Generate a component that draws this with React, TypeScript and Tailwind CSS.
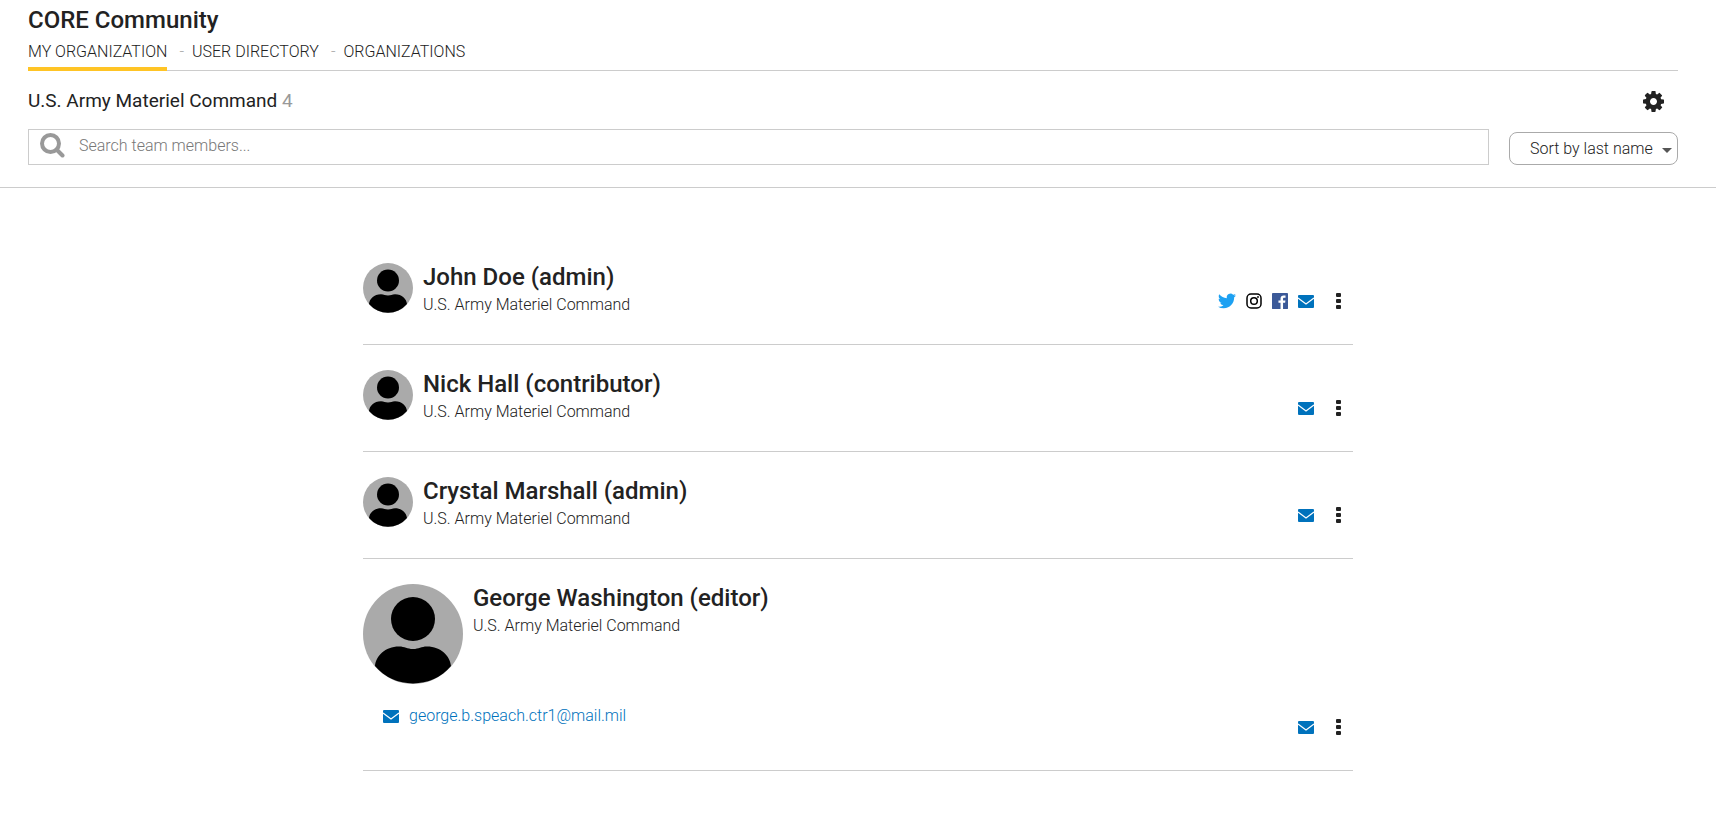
import React from "react";

function Avatar({ large = false }: { large?: boolean }) {
  return (
    <svg viewBox="0 0 100 100" aria-hidden="true" className={large ? "size-[100px] shrink-0" : "size-[50px] shrink-0"}>
      <circle cx="50" cy="50" r="50" fill="#aaaaaa" />
      <circle cx="50" cy="35" r="22" />
      <path d="M12 82C13 72 22 62.500 36 62.500C42 62.500 44 65 50 65C56 65 58 62.500 64 62.500C78 62.500 87 72 88 82A50 50 0 0 1 12 82Z" />
    </svg>
  );
}

function Gear() {
  return (
    <svg viewBox="128 128 1536 1536" aria-hidden="true" className="size-[21px] fill-[#222222]">
      <path d="M1152 896q0-106-75-181t-181-75-181 75-75 181 75 181 181 75 181-75 75-181zm512-109v222q0 12-8 23t-20 13l-185 28q-19 54-39 91 35 50 107 138 10 12 10 25t-9 23q-27 37-99 108t-94 71q-12 0-26-9l-138-108q-44 23-91 38-16 136-29 186-7 28-36 28h-222q-14 0-24.500-8.500t-11.500-21.500l-28-184q-49-16-90-37l-141 107q-10 9-25 9-14 0-25-11-126-114-165-168-7-10-7-23 0-12 8-23 15-21 51-66.500t54-70.500q-27-50-41-99l-183-27q-13-2-21-12.500t-8-23.500v-222q0-12 8-23t19-13l186-28q14-46 39-92-40-57-107-138-10-12-10-24 0-10 9-23 26-36 98.500-107.500t94.500-71.500q13 0 26 10l138 107q44-23 91-38 16-136 29-186 7-28 36-28h222q14 0 24.500 8.500t11.500 21.500l28 184q49 16 90 37l142-107q9-9 24-9 13 0 25 10 129 119 165 170 7 8 7 22 0 12-8 23-15 21-51 66.500t-54 70.500q26 50 41 98l183 28q13 2 21 12.500t8 23.500z" />
    </svg>
  );
}

function SearchIcon() {
  return (
    <svg viewBox="0 0 25 25" aria-hidden="true" className="size-[25px] shrink-0" fill="none" stroke="#999999">
      <circle cx="10.500" cy="10.500" r="8.500" strokeWidth="4" />
      <path d="M17 17L22.500 22.500" strokeWidth="4" strokeLinecap="round" />
    </svg>
  );
}

function Mail() {
  return (
    <svg viewBox="0 0 16 13" aria-hidden="true" className="h-[13px] w-4 shrink-0">
      <rect width="16" height="13" rx="1" fill="#0072bc" />
      <path d="M0 3L8 9L16 3" fill="none" stroke="#fff" strokeWidth="1.200" />
    </svg>
  );
}

function Twitter() {
  return (
    <svg viewBox="0 0 24 24" aria-hidden="true" className="size-[18px] fill-[#1da1f2]">
      <path d="M23.950 4.570a10 10 0 0 1-2.820.770 4.960 4.960 0 0 0 2.160-2.720c-.950.550-2 .960-3.130 1.180a4.920 4.920 0 0 0-8.380 4.480C7.690 8.100 4.070 6.130 1.640 3.160a4.820 4.820 0 0 0-.670 2.480c0 1.710.870 3.210 2.190 4.100a4.900 4.900 0 0 1-2.230-.620v.060a4.920 4.920 0 0 0 3.950 4.830 5 5 0 0 1-2.210.080 4.940 4.940 0 0 0 4.600 3.420A9.870 9.870 0 0 1 0 19.540a14 14 0 0 0 7.550 2.210c9.050 0 14-7.500 14-13.980 0-.210 0-.420-.020-.630a9.940 9.940 0 0 0 2.460-2.550z" />
    </svg>
  );
}

function Instagram() {
  return (
    <svg viewBox="0 0 16 16" aria-hidden="true" className="size-4" fill="none" stroke="#000" strokeWidth="1.500">
      <rect x="1" y="1" width="14" height="14" rx="4" />
      <circle cx="8" cy="8" r="3.300" />
      <circle cx="12" cy="4" r="0.900" fill="#000" stroke="none" />
    </svg>
  );
}

function Facebook() {
  return (
    <svg viewBox="0 0 24 24" aria-hidden="true" className="size-4">
      <rect x="0" y="0" width="24" height="24" rx="1.300" fill="#3b5998" />
      <path d="M16.570 24v-9.290h3.120l.470-3.620h-3.590V8.780c0-1.050.290-1.760 1.790-1.760h1.920V3.780a26 26 0 0 0-2.800-.140c-2.770 0-4.660 1.690-4.660 4.790v2.660H9.690v3.620h3.130V24z" fill="#fff" />
    </svg>
  );
}

function Dots() {
  return (
    <svg viewBox="0 0 5 16" aria-hidden="true" className="h-4 w-[5px] fill-[#222222]">
      <rect width="5" height="4" rx="1" />
      <rect y="6" width="5" height="4" rx="1" />
      <rect y="12" width="5" height="4" rx="1" />
    </svg>
  );
}

type Member = { name: string; role: string; social?: boolean; email?: string };

const members: Member[] = [
  { name: "John Doe", role: "admin", social: true },
  { name: "Nick Hall", role: "contributor" },
  { name: "Crystal Marshall", role: "admin" },
  { name: "George Washington", role: "editor", email: "george.b.speach.ctr1@mail.mil" },
];

function MemberRow({ name, role, social, email }: Member) {
  return (
    <li className="flex items-end justify-between border-b border-[#cccccc] py-[25px]">
      <div>
        <div className="flex gap-[10px]">
          <Avatar large={!!email} />
          <div>
            <h3 className="text-2xl leading-[28px] font-medium">{name} ({role})</h3>
            <p className="text-base leading-[28px] font-light">U.S. Army Materiel Command</p>
          </div>
        </div>
        {email && (
          <a href={`mailto:${email}`} className="mt-5 mb-[17px] ml-5 flex items-center gap-[10px] text-base leading-6 font-light text-[#0072bc]">
            <Mail />
            {email}
          </a>
        )}
      </div>
      <div className="mb-2 flex h-5 items-center gap-[10px] pr-3">
        {social && (
          <>
            <a href="#twitter" aria-label="Twitter"><Twitter /></a>
            <a href="#instagram" aria-label="Instagram"><Instagram /></a>
            <a href="#facebook" aria-label="Facebook"><Facebook /></a>
          </>
        )}
        <a href="#email" aria-label={`Email ${name}`}><Mail /></a>
        <button type="button" aria-label={`Options for ${name}`} className="ml-3"><Dots /></button>
      </div>
    </li>
  );
}

export default function App() {
  return (
    <div className="min-h-screen bg-white font-['Roboto',sans-serif] text-[#222222]">
      <header className="border-b border-[#cccccc] pr-[38px] pb-[22px] pl-7">
        <h1 className="pt-1 text-2xl leading-8 font-medium">CORE Community</h1>
        <nav className="flex border-b border-[#cccccc] text-base leading-[31px] font-light">
          <a href="#mine" className="-mb-px border-b-4 border-[#ffc425]">MY ORGANIZATION</a>
          <span className="pr-2 pl-3 text-[#aaaaaa]">-</span>
          <a href="#users">USER DIRECTORY</a>
          <span className="pr-2 pl-3 text-[#aaaaaa]">-</span>
          <a href="#organizations">ORGANIZATIONS</a>
        </nav>
        <div className="mt-4 flex items-center justify-between pr-[14px]">
          <h2 className="text-[19px] leading-7 font-normal">U.S. Army Materiel Command <span className="text-[#999999]">4</span></h2>
          <button type="button" aria-label="Settings"><Gear /></button>
        </div>
        <div className="mt-[14px] flex items-end gap-5">
          <label className="flex h-9 flex-1 items-start gap-3 border border-[#cccccc] pt-[3px] pl-[11px]">
            <SearchIcon />
            <input type="search" aria-label="Search team members" placeholder="Search team members..." className="min-w-0 flex-1 pl-[2px] text-base leading-[25px] font-light outline-none placeholder:text-[#777777]" />
          </label>
          <div className="grid items-center">
            <select aria-label="Sort members" className="col-start-1 row-start-1 h-[33px] w-[169px] appearance-none rounded-lg border border-[#aaaaaa] bg-white pl-5 text-base font-light">
              <option>Sort by last name</option>
              <option>Sort by first name</option>
            </select>
            <svg viewBox="0 0 10 5" aria-hidden="true" className="pointer-events-none col-start-1 row-start-1 mt-1 mr-[6px] h-[5px] w-[10px] justify-self-end fill-[#555555]"><path d="M0 0h10L5 5z" /></svg>
          </div>
        </div>
      </header>
      <main className="mx-auto max-w-[990px] pt-[50px]">
        <ul>
          {members.map((m) => <MemberRow key={m.name} {...m} />)}
        </ul>
      </main>
    </div>
  );
}
